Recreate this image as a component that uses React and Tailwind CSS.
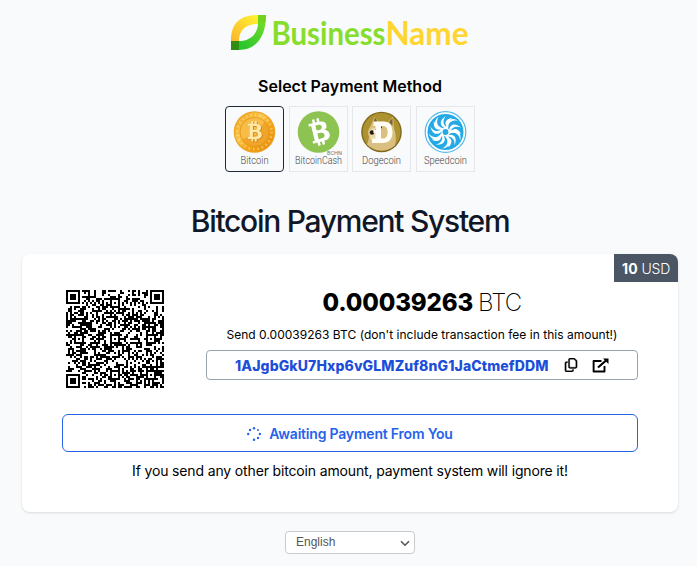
import React from 'react';
import { FaRegCopy } from 'react-icons/fa6';

const ADDRESS = '1AJgbGkU7Hxp6vGLMZuf8nG1JaCtmefDDM';
const AMOUNT = '0.00039263';

// QR code, version 8, error correction level H, byte mode, mask 0.
const SIZE = 49;

function gfMul(a, b) {
  let z = 0;
  for (let i = 7; i >= 0; i--) {
    z = (z << 1) ^ ((z >>> 7) * 0x11d);
    z ^= ((b >>> i) & 1) * a;
  }
  return z;
}

function divisor(degree) {
  const out = new Array(degree).fill(0);
  out[degree - 1] = 1;
  let root = 1;
  for (let i = 0; i < degree; i++) {
    for (let j = 0; j < degree; j++) {
      out[j] = gfMul(out[j], root);
      if (j + 1 < degree) out[j] ^= out[j + 1];
    }
    root = gfMul(root, 2);
  }
  return out;
}

function remainder(data, div) {
  const out = div.map(() => 0);
  for (const b of data) {
    const f = b ^ out.shift();
    out.push(0);
    div.forEach((c, i) => (out[i] ^= gfMul(c, f)));
  }
  return out;
}

function codewords(text) {
  const bits = [];
  const put = (v, n) => {
    for (let i = n - 1; i >= 0; i--) bits.push((v >>> i) & 1);
  };
  put(4, 4);
  put(text.length, 8);
  for (const ch of text) put(ch.charCodeAt(0), 8);
  put(0, 4);
  const data = [];
  for (let i = 0; i < bits.length; i += 8) data.push(parseInt(bits.slice(i, i + 8).join(''), 2));
  for (let pad = 0xec; data.length < 86; pad ^= 0xec ^ 0x11) data.push(pad);
  const div = divisor(26);
  const blocks = [];
  let k = 0;
  for (const len of [14, 14, 14, 14, 15, 15]) {
    const d = data.slice(k, k + len);
    k += len;
    blocks.push({ d, e: remainder(d, div) });
  }
  const out = [];
  for (let i = 0; i < 15; i++) blocks.forEach((b) => i < b.d.length && out.push(b.d[i]));
  for (let i = 0; i < 26; i++) blocks.forEach((b) => out.push(b.e[i]));
  return out;
}

function qrPath(text) {
  const m = Array.from({ length: SIZE }, () => new Array(SIZE).fill(null));
  const set = (x, y, v) => {
    if (x >= 0 && y >= 0 && x < SIZE && y < SIZE) m[y][x] = v ? 1 : 0;
  };
  for (let i = 0; i < SIZE; i++) {
    set(6, i, i % 2 === 0);
    set(i, 6, i % 2 === 0);
  }
  for (const [cx, cy] of [[3, 3], [SIZE - 4, 3], [3, SIZE - 4]])
    for (let dy = -4; dy <= 4; dy++)
      for (let dx = -4; dx <= 4; dx++) {
        const r = Math.max(Math.abs(dx), Math.abs(dy));
        set(cx + dx, cy + dy, r !== 2 && r !== 4);
      }
  for (const cx of [6, 24, 42])
    for (const cy of [6, 24, 42]) {
      if (cx === 6 && cy !== 24) continue;
      if (cx === 42 && cy === 6) continue;
      for (let dy = -2; dy <= 2; dy++)
        for (let dx = -2; dx <= 2; dx++)
          set(cx + dx, cy + dy, Math.max(Math.abs(dx), Math.abs(dy)) !== 1);
    }
  let rem = 16;
  for (let i = 0; i < 10; i++) rem = (rem << 1) ^ ((rem >>> 9) * 0x537);
  const f = ((16 << 10) | rem) ^ 0x5412;
  const fb = (i) => (f >>> i) & 1;
  for (let i = 0; i <= 5; i++) set(8, i, fb(i));
  set(8, 7, fb(6));
  set(8, 8, fb(7));
  set(7, 8, fb(8));
  for (let i = 9; i < 15; i++) set(14 - i, 8, fb(i));
  for (let i = 0; i < 8; i++) set(SIZE - 1 - i, 8, fb(i));
  for (let i = 8; i < 15; i++) set(8, SIZE - 15 + i, fb(i));
  set(8, SIZE - 8, 1);
  for (let i = 0; i < 18; i++) {
    const a = SIZE - 11 + (i % 3);
    const b = Math.floor(i / 3);
    set(a, b, (0x085bc >>> i) & 1);
    set(b, a, (0x085bc >>> i) & 1);
  }
  const cw = codewords(text);
  let n = 0;
  for (let right = SIZE - 1; right >= 1; right -= 2) {
    if (right === 6) right = 5;
    for (let v = 0; v < SIZE; v++)
      for (let j = 0; j < 2; j++) {
        const x = right - j;
        const y = ((right + 1) & 2) === 0 ? SIZE - 1 - v : v;
        if (m[y][x] === null) {
          const bit = n < cw.length * 8 ? (cw[n >>> 3] >>> (7 - (n & 7))) & 1 : 0;
          n++;
          m[y][x] = bit ^ ((x + y) % 2 === 0 ? 1 : 0);
        }
      }
  }
  let d = '';
  m.forEach((row, y) => row.forEach((v, x) => v && (d += `M${x} ${y}h1v1h-1z`)));
  return d;
}

const QR = qrPath(`bitcoin:${ADDRESS}?amount=${AMOUNT}`);

function Logo() {
  return (
    <svg width="240" height="40" viewBox="0 0 240 40" className="block">
      <defs>
        <linearGradient id="leafY" x1="0" y1="1" x2="1" y2="0">
          <stop offset="0" stopColor="#f9b52c" />
          <stop offset="1" stopColor="#fff533" />
        </linearGradient>
        <linearGradient id="leafG" x1="1" y1="0" x2="0.3" y2="1">
          <stop offset="0" stopColor="#7fe02a" />
          <stop offset="1" stopColor="#2cc62c" />
        </linearGradient>
      </defs>
      <path d="M1 27C1 9 10 1 28 1V10C16 10 9 16 9 27Z" fill="url(#leafY)" />
      <path d="M36 1C36 24 25 36 9 36V27C20 27 28 20 28 9V1Z" fill="url(#leafG)" />
      <path d="M28 1h8q0 4-1 8h-7z" fill="#73d21b" />
      <path d="M1 27h8v9H1z" fill="#2f8d14" />
      <g fontSize="32" fontWeight="700" className="font-[Lato,sans-serif]">
        <text x="41.5" y="31.2" textLength="114" lengthAdjust="spacingAndGlyphs" fill="#86dd2c">Business</text>
        <text x="155.500" y="31.2" textLength="83" lengthAdjust="spacingAndGlyphs" fill="#ffd532">Name</text>
      </g>
    </svg>
  );
}

function BitcoinSign({ fill, rotate }) {
  return (
    <g transform={`rotate(${rotate} 21 21)`} fill={fill}>
      <path
        fillRule="evenodd"
        d="M13 11h4.500V7.500h2.500v3.500h2V7.500h2.500v3.800c4 .4 5.800 2 5.800 4.800 0 2-1 3.600-3 4.300 2.600.6 4 2.400 4 5 0 3.500-2.400 5.400-6.800 5.600V34.500H22v-3.500h-2v3.500h-2.500v-3.500h-4.500v-2.500h2.300V13.500H13zM19.500 14v5.200h2.800c2 0 3-.9 3-2.600s-1-2.600-3-2.600zM19.500 22.300v5.700h3.300c2.200 0 3.300-1 3.300-2.900s-1.100-2.800-3.300-2.800z"
      />
    </g>
  );
}

function BitcoinCoin() {
  return (
    <>
      <defs>
        <linearGradient id="gold" x1="0" y1="0" x2="1" y2="1">
          <stop offset="0" stopColor="#f0a01c" />
          <stop offset="0.4" stopColor="#fbc64b" />
          <stop offset="0.6" stopColor="#f3a41a" />
          <stop offset="1" stopColor="#e58a09" />
        </linearGradient>
      </defs>
      <circle cx="21" cy="21" r="20.800" fill="#eba426" />
      <circle cx="21" cy="21" r="19.700" fill="url(#gold)" />
      <circle cx="21" cy="21" r="17.200" fill="none" stroke="#fde6a0" strokeWidth="2.400" strokeDasharray="1.300 3.200" opacity="0.6" />
      <circle cx="21" cy="21" r="14.500" fill="#f1a42a" stroke="#dd9416" strokeWidth="0.700" />
      <path d="M9 28A14 14 0 0 1 31 11L22 24Z" fill="#ffd468" opacity="0.5" />
      <g transform="translate(5.300 5) scale(0.76)"><BitcoinSign fill="#c27b10" rotate={0} /></g>
      <g transform="translate(4.600 4.400) scale(0.76)"><BitcoinSign fill="#ffe9a8" rotate={0} /></g>
    </>
  );
}

function BitcoinCashCoin() {
  return (
    <>
      <circle cx="21" cy="21" r="20.800" fill="#8dc351" />
      <BitcoinSign fill="#fff" rotate={-14} />
    </>
  );
}

function DogeCoin() {
  return (
    <>
      <circle cx="21" cy="21" r="20.300" fill="#80691f" />
      <circle cx="21" cy="21" r="18.900" fill="#ad9230" />
      <path d="M10 15l4-9 4.500 5q5-1 9 0l5-5.500 1 12q3 8 1 17-6 5-13 5-9 0-15-6 2-5 2-8-3-4 1.500-10.500z" fill="#d9bf80" />
      <path d="M13 11l1.500-4.500 2.500 4zM28.500 11l3.500-4v8z" fill="#7b6330" />
      <path d="M9.500 19q4-5 6 0v10q-3 3-5.500-1-1-4-.5-9z" fill="#e9d9ac" />
      <circle cx="11.500" cy="21.500" r="2.200" fill="#211b12" />
      <path d="M14.500 18.500l2.500-1v3zM19 16l2.500-.6v2z" fill="#3a2d18" />
      <path fillRule="evenodd" d="M13 10.500h9.500c6.500 0 9.500 4 9.500 10.700S28.500 32 22 32H11.500v-4.500H15V22h-2v-3h2v-4h-2zM20.500 15v12.500h2c3 0 4.600-2.300 4.600-6.300S25.500 15 22.500 15z" fill="#fffdf4" />
    </>
  );
}

function SpeedCoin() {
  return (
    <>
      <circle cx="21" cy="21" r="20.300" fill="#fff" stroke="#51b9ea" strokeWidth="1.200" />
      <circle cx="21" cy="21" r="18" fill="#24a9e6" />
      {[20, 92, 164, 236, 308].map((a) => (
        <g key={a} transform={`rotate(${a} 21 21)`} fill="#fff">
          <path d="M24 19C22 12.500 26 8.500 34 11.500C29.500 11.500 25 13 25.500 19.500Z" />
          <path d="M20.500 17.500C16 10 21 4.500 29 6C24 7 19.500 10 22.500 17Z" />
          <path d="M26.500 17.500C28 14 32 13.500 36.500 17.500C32 16.500 29 16.500 27 19.500Z" />
        </g>
      ))}
      <circle cx="21" cy="21" r="3.600" fill="none" stroke="#fff" strokeWidth="1.300" />
    </>
  );
}

const COINS = [
  { name: 'Bitcoin', Coin: BitcoinCoin, x: 14.500, w: 28, active: true },
  { name: 'BitcoinCash', Coin: BitcoinCashCoin, x: 5, w: 47, note: 'BCHN' },
  { name: 'Dogecoin', Coin: DogeCoin, x: 9, w: 39 },
  { name: 'Speedcoin', Coin: SpeedCoin, x: 7, w: 43 },
];

function CoinButton({ name, Coin, x, w, active, note }) {
  return (
    <button className={`h-[66px] w-[59px] border ${active ? 'rounded-[4px] border-[#1f2937]' : 'border-gray-200'}`}>
      <svg width="57" height="64" viewBox="0 0 57 64" className="block font-[Roboto,sans-serif]">
        <g transform="translate(7.500 4)"><Coin /></g>
        {note && <text x="37" y="47.800" fontSize="5.500" textLength="15" lengthAdjust="spacingAndGlyphs" fill="#777">{note}</text>}
        <text x={x} y="57.300" fontSize="10.500" fontWeight="300" textLength={w} lengthAdjust="spacingAndGlyphs" fill="#444">{name}</text>
      </svg>
    </button>
  );
}

function Spinner() {
  const dots = [[7, 1.300, 1.200], [11, 3, 1], [12.900, 7, 1.200], [11, 11, 1.200], [7, 12.800, 1.250], [1.200, 7, 1.200], [3, 3, 1.200]];
  return (
    <svg width="14" height="14" viewBox="0 0 14 14" className="mt-0.5" fill="#2563eb">
      {dots.map(([cx, cy, r]) => <circle key={`${cx},${cy}`} cx={cx} cy={cy} r={r} />)}
    </svg>
  );
}

function ExternalLink() {
  return (
    <svg width="17" height="15" viewBox="0 0 17 15" fill="none" stroke="#000" strokeWidth="1.900">
      <path d="M9.500 3H1.600V13.500H12.500V8" strokeLinejoin="round" />
      <path d="M6 9.500L14 2.500" strokeWidth="2.200" />
      <path d="M11 0.500H16.500V6Z" fill="#000" stroke="none" />
    </svg>
  );
}

export default function App() {
  return (
    <main className="flex h-[566px] w-[697px] flex-col items-center overflow-hidden bg-[#f9fafb] font-[Inter,sans-serif] text-black">
      <div className="ml-[3px] mt-[14px]"><Logo /></div>
      <h2 className="ml-[3px] mt-[20px] text-base font-semibold leading-6">Select Payment Method</h2>
      <div className="ml-[3px] mt-2 flex w-[250px] justify-between">
        {COINS.map((c) => <CoinButton key={c.name} {...c} />)}
      </div>
      <h1 className="ml-[3px] mt-[31px] text-[30px] font-medium leading-9 tracking-[-1.28px] text-gray-900">Bitcoin Payment System</h1>

      <section className="relative ml-[3px] mt-[15px] flex h-[258px] w-[656px] flex-col overflow-hidden rounded-lg bg-white px-10 pt-[34px] shadow">
        <div className="absolute right-0 top-0 flex h-7 w-16 items-center justify-center gap-1 bg-[#4b5563] pt-0.5 text-sm text-white">
          <b className="font-bold">10</b>
          <span className="font-light tracking-[-0.3px]">USD</span>
        </div>
        <div className="flex h-[98px]">
          <svg width="98" height="98" viewBox="0 0 49 49" shapeRendering="crispEdges" className="ml-1 mt-[2px]">
            <path d={QR} />
          </svg>
          <div className="-mt-px ml-[42px] flex w-[432px] flex-col items-center">
            <div className="text-2xl leading-8"><b className="font-extrabold tracking-[-0.15px]">{AMOUNT}</b><span className="ml-[5px] font-extralight tracking-[-0.8px]">BTC</span></div>
            <p className="mt-[6px] text-xs leading-5 tracking-[0.02px]">Send {AMOUNT} BTC (don't include transaction fee in this amount!)</p>
            <div className="mt-[5px] flex h-[30px] w-full shrink-0 items-center rounded border border-gray-400 pl-[28px]">
              <span className="w-[316px] whitespace-nowrap pt-px text-sm font-extrabold tracking-[0.12px] text-[#1d4ed8]">{ADDRESS}</span>
              <span className="ml-[13px]"><FaRegCopy size={14} stroke="#000" strokeWidth={12} /></span>
              <span className="ml-[14px]"><ExternalLink /></span>
            </div>
          </div>
        </div>
        <div className="mt-[28px] flex h-[38px] shrink-0 items-center justify-center gap-2 rounded-md border border-[#2563eb] text-sm font-semibold text-[#2563eb]">
          <Spinner />
          <span className="pt-px tracking-[-0.2px]">Awaiting Payment From You</span>
        </div>
        <p className="mt-[9px] text-center text-sm tracking-[-0.15px]">If you send any other bitcoin amount, payment system will ignore it!</p>
      </section>

      <div className="ml-[3px] mt-[19px] flex h-[23px] w-[130px] items-center justify-between rounded border border-[#c9cacc] bg-white pl-2.5 pr-1 font-['Liberation_Sans',sans-serif] text-xs text-[#555]">
        <span className="pb-px">English</span>
        <svg width="10" height="7" viewBox="0 0 10 7" fill="none" stroke="#555" strokeWidth="1.600" className="mt-0.5"><path d="M1 1.200l4 4 4-4" /></svg>
      </div>
    </main>
  );
}
